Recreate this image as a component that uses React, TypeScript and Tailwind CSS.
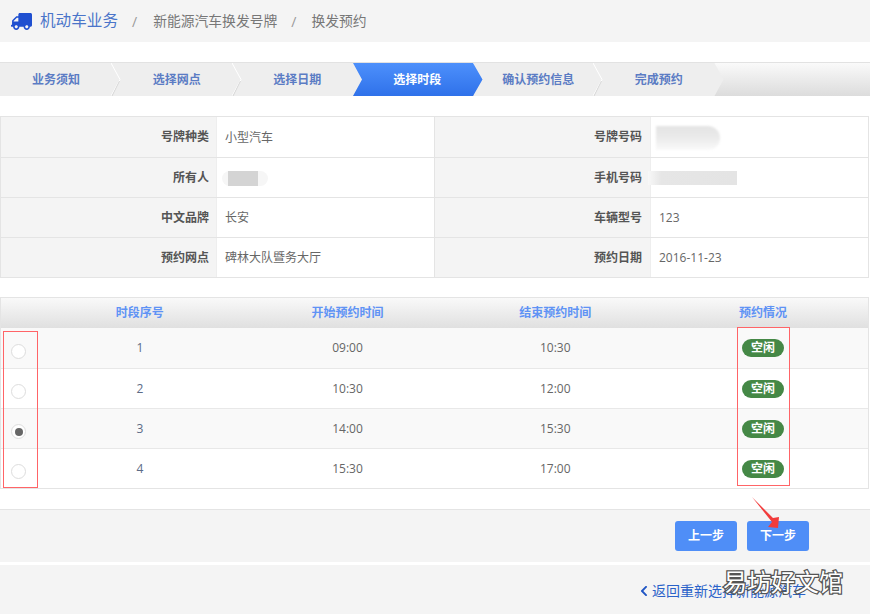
import React from 'react';
import { FaTruck, FaChevronLeft } from 'react-icons/fa';

const cjk = { fontFamily: '"Open Sans", "Noto Sans CJK SC", sans-serif' };

const steps = ['业务须知', '选择网点', '选择日期', '选择时段', '确认预约信息', '完成预约'];

const infoRows = [
  ['号牌种类', '小型汽车', '号牌号码', 'smudge-plate'],
  ['所有人', 'smudge-owner', '手机号码', 'smudge-phone'],
  ['中文品牌', '长安', '车辆型号', '123'],
  ['预约网点', '碑林大队暨务大厅', '预约日期', '2016-11-23'],
];

const slots = [
  { id: 1, start: '09:00', end: '10:30', checked: false },
  { id: 2, start: '10:30', end: '12:00', checked: false },
  { id: 3, start: '14:00', end: '15:30', checked: true },
  { id: 4, start: '15:30', end: '17:00', checked: false },
];

function Separator() {
  return (
    <svg className="absolute right-[-9px] top-0 z-10" width="10" height="33" viewBox="0 0 10 33">
      <polyline points="0,0 9,16.5 0,33" fill="none" stroke="#ffffff" strokeWidth="1" />
      <line x1="8.5" y1="18" x2="1" y2="33" stroke="#d6d6d6" strokeWidth="1" />
    </svg>
  );
}

function StepsBar() {
  return (
    <div className="mt-[20px] h-[33px] flex bg-gradient-to-b from-[#fafafa] to-[#dcdcdc] border-t border-[#e2e2e2] box-content">
      {steps.map((label, i) => {
        const active = i === 3;
        const first = i === 0;
        return (
          <div
            key={label}
            className={`relative h-[33px] shrink-0 ${first ? 'w-[112px]' : 'w-[120.5px]'}`}
          >
            {active ? (
              <div className="absolute left-0 top-0 z-20 h-[33px] w-[129.5px] bg-gradient-to-b from-[#4d90fb] to-[#2f71ea] [clip-path:polygon(0_0,120px_0,129.5px_50%,120px_100%,0_100%,9px_50%)] flex items-center justify-center pr-[1px] text-[12px] font-bold text-white">
                {label}
              </div>
            ) : (
              <>
                <div
                  className={`absolute left-0 top-0 h-[33px] bg-[#eeeeee] flex items-center justify-center text-[12px] font-bold text-[#5b7cc4] ${first ? 'w-[121px] [clip-path:polygon(0_0,112px_0,121px_50%,112px_100%,0_100%)] pr-[9px]' : 'w-[129.5px] [clip-path:polygon(0_0,120.5px_0,129.5px_50%,120.5px_100%,0_100%)]'}`}
                >
                  {label}
                </div>
                {i !== 2 && i !== 5 && <Separator />}
              </>
            )}
          </div>
        );
      })}
    </div>
  );
}

function Smudge({ kind }: { kind: string }) {
  if (kind === 'smudge-plate') {
    return (
      <div className="-ml-[3px] h-[24px] w-[64px] rounded-r-[12px] bg-gradient-to-b from-[#e4e4e4] via-[#ebebeb] to-[#fafafa] blur-[1px]" />
    );
  }
  if (kind === 'smudge-owner') {
    return (
      <div className="-ml-[3px] flex h-[15px] w-[46px] items-center rounded-[8px] bg-[#f6f6f6] pl-[6px]">
        <div className="h-[15px] w-[30px] bg-[#d4d4d4]" />
      </div>
    );
  }
  if (kind === 'smudge-phone') {
    return (
      <div className="-ml-[11px] h-[14px] w-[89px] bg-gradient-to-r from-[#f8f8f8] via-[#e6e6e6] via-[15%] to-[#e4e4e4] blur-[0.5px]" />
    );
  }
  return <span>{kind}</span>;
}

function InfoTable() {
  return (
    <div className="mt-[20px] w-[869px] border border-[#e4e4e4] text-[12px]">
      {infoRows.map((row, i) => (
        <div
          key={row[0]}
          className={`grid h-[40px] grid-cols-[215px_218px_216px_1fr] ${i > 0 ? 'border-t border-[#e4e4e4]' : ''}`}
        >
          <div className="flex items-center justify-end bg-[#f4f4f4] pr-[7px] font-bold text-[#555555]">{row[0]}</div>
          <div className="flex items-center pl-[8px] pt-[1px] text-[#666666] border-l border-[#eeeeee]">
            <Smudge kind={row[1]} />
          </div>
          <div className="flex items-center justify-end bg-[#f4f4f4] pr-[8px] font-bold text-[#555555] border-l border-[#e4e4e4]">{row[2]}</div>
          <div className="flex items-center pl-[8px] pt-[1px] text-[#666666] border-l border-[#eeeeee]">
            <Smudge kind={row[3]} />
          </div>
        </div>
      ))}
    </div>
  );
}

function Radio({ checked }: { checked: boolean }) {
  return (
    <div className="mt-[6px] flex h-[15px] w-[15px] items-center justify-center rounded-full border border-[#dddddd] bg-white">
      {checked && <div className="h-[8px] w-[8px] rounded-full bg-[#666666]" />}
    </div>
  );
}

function SlotTable() {
  const cols = 'grid grid-cols-[35px_207.7px_207.7px_207.7px_207.7px]';
  return (
    <div className="mt-[19px] w-[869px] border-x border-b border-[#e4e4e4] text-[12px]">
      <div className={`${cols} h-[31px] items-center border-t border-[#e4e4e4] bg-gradient-to-b from-[#f9f9f9] to-[#e0e0e0] font-bold text-[#5f93f5] text-center`}>
        <div />
        <div>时段序号</div>
        <div>开始预约时间</div>
        <div>结束预约时间</div>
        <div>预约情况</div>
      </div>
      {slots.map((s, i) => (
        <div
          key={s.id}
          className={`${cols} h-[40px] items-center text-center text-[#666666] ${i % 2 === 0 ? 'bg-[#f9f9f9]' : 'bg-white'} ${i > 0 ? 'border-t border-[#e8e8e8]' : ''}`}
        >
          <div className="flex justify-center">
            <Radio checked={s.checked} />
          </div>
          <div className="text-[#5c6b86]">{s.id}</div>
          <div>{s.start}</div>
          <div>{s.end}</div>
          <div className="flex justify-center">
            <span className="flex h-[18px] w-[42px] items-center justify-center rounded-full bg-[#458846] font-bold text-white">
              空闲
            </span>
          </div>
        </div>
      ))}
    </div>
  );
}

export default function App() {
  return (
    <div className="relative h-[614px] w-[870px] overflow-hidden bg-white" style={cjk}>
      {/* Header */}
      <div className="flex h-[42px] items-center bg-[#f4f4f4] pl-[11px]">
        <FaTruck className="h-[21px] w-[21px] -scale-x-100 text-[#1f4fd0]" />
        <span className="ml-[8px] text-[15.6px] text-[#4a74c9]">机动车业务</span>
        <span className="ml-[14px] text-[14px] text-[#999999]">/</span>
        <span className="ml-[16px] text-[13.8px] text-[#777777]">新能源汽车换发号牌</span>
        <span className="ml-[14px] text-[14px] text-[#999999]">/</span>
        <span className="ml-[15px] text-[13.8px] text-[#777777]">换发预约</span>
      </div>

      <StepsBar />
      <InfoTable />
      <SlotTable />

      {/* Buttons */}
      <div className="mt-[20px] flex h-[53px] items-start justify-end gap-[10px] border-t border-[#e4e4e4] bg-[#f4f4f4] pr-[61px] pt-[11px]">
        <button className="h-[30px] w-[62px] rounded-[3px] bg-[#4f8ef7] text-[12px] font-bold text-white">上一步</button>
        <button className="h-[30px] w-[62px] rounded-[3px] bg-[#4f8ef7] text-[12px] font-bold text-white">下一步</button>
      </div>

      {/* Footer */}
      <div className="mt-[3px] flex h-[49px] items-start justify-end bg-[#f4f4f4] pr-[64px] pt-[17px]">
        <a className="flex items-center gap-[3px] text-[14px] leading-[18px] text-[#2a62c9]">
          <FaChevronLeft className="h-[12px] w-[10px] text-[#1f55c4]" />
          返回重新选择新能源汽车
        </a>
      </div>

      {/* Red annotations */}
      <div className="absolute left-[3px] top-[331px] h-[157px] w-[35px] border border-solid border-red-400" />
      <div className="absolute left-[737px] top-[327px] h-[159px] w-[53px] border border-solid border-red-400" />
      <svg className="absolute left-[745px] top-[493px]" width="40" height="42" viewBox="0 0 40 42">
        <polygon points="7,4 28,25 34,24 33,35 23,34 27,29" fill="#f23c3c" />
      </svg>

      {/* Watermark */}
      <div className="absolute left-[723px] top-[566px] text-[24px] leading-[32px] text-white [-webkit-text-stroke:2.5px_#555555] [paint-order:stroke_fill]">
        易坊好文馆
      </div>
    </div>
  );
}
